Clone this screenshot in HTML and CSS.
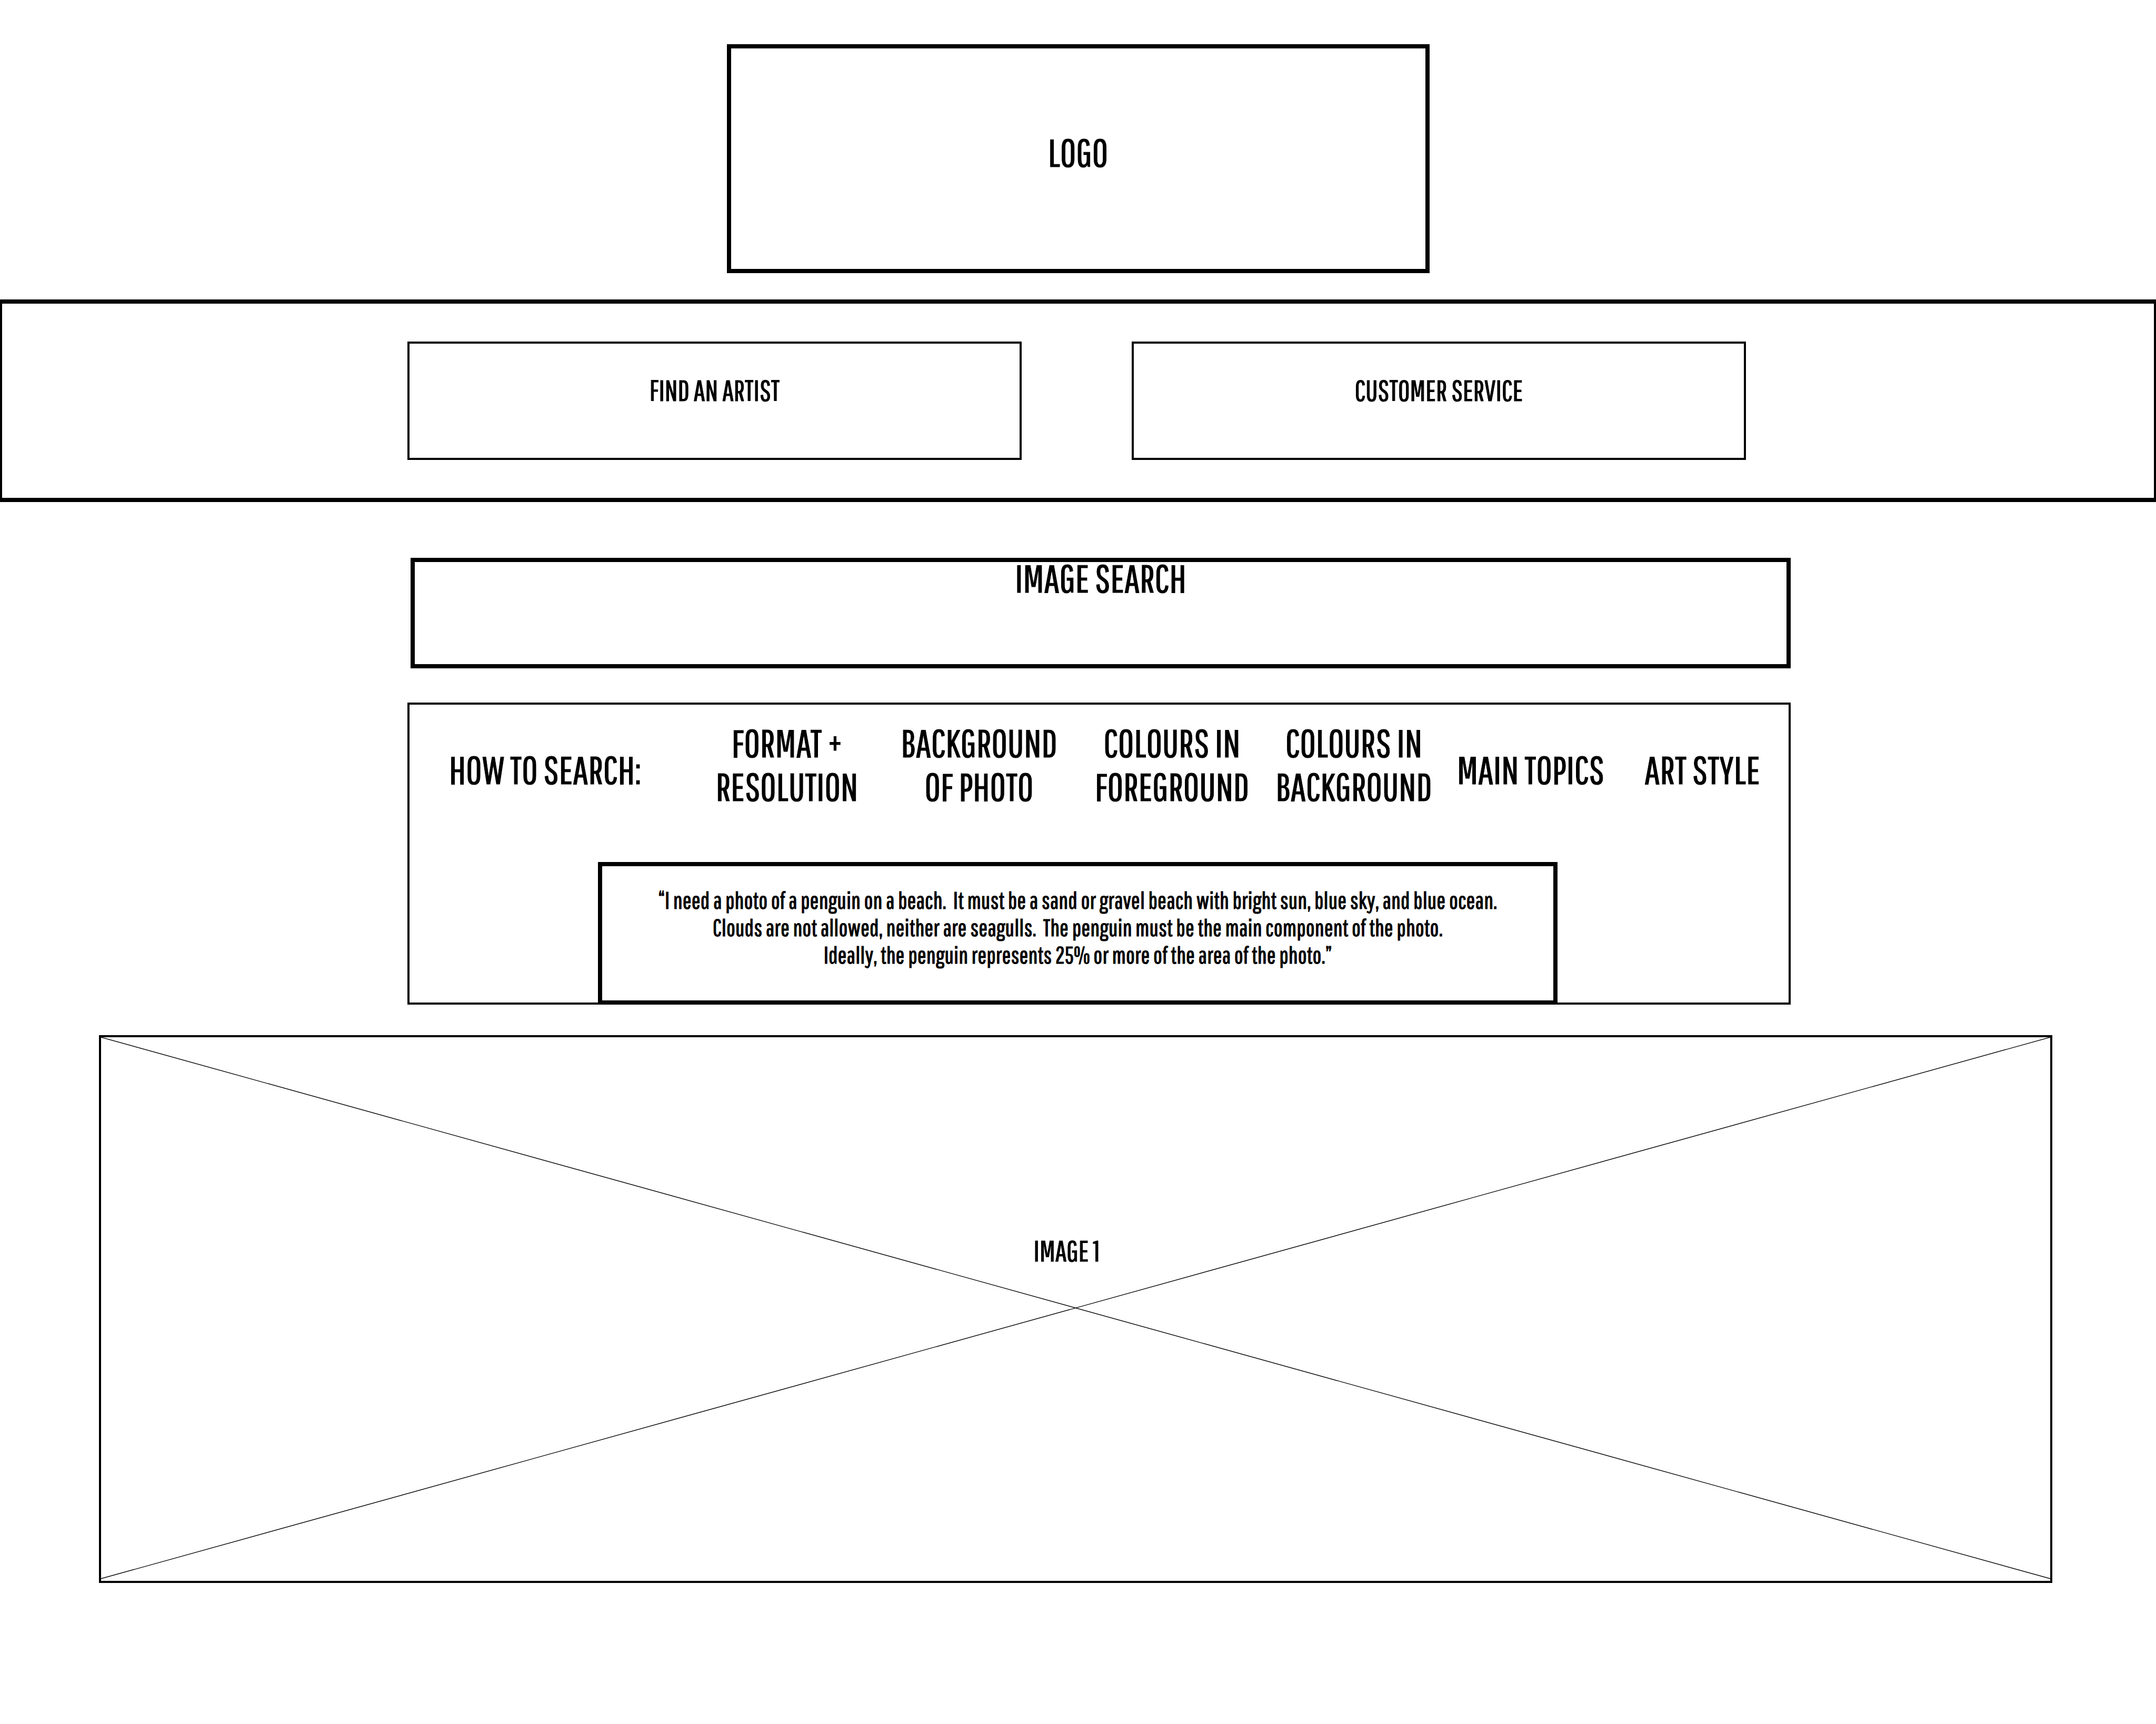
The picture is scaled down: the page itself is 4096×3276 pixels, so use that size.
FILE: index.html
```html
<!DOCTYPE html>
<html lang="en">
<head>
  <meta charset="utf-8">
  <meta name="viewport" content="width=device-width, initial-scale=1">
  <title>Image Search</title>
  <link rel="stylesheet" href="styles.css">
</head>
<body>
  <header class="masthead">
    <h1 class="logo">LOGO</h1>
  </header>

  <nav class="main-nav" aria-label="Main">
    <a class="nav-link" href="#artists">FIND AN ARTIST</a>
    <a class="nav-link" href="#service">CUSTOMER SERVICE</a>
  </nav>

  <main>
    <form class="search" role="search">
      <textarea class="search-box" rows="1" aria-label="Image search" placeholder="IMAGE SEARCH"></textarea>
    </form>

    <section class="guide">
      <div class="guide-row">
        <h2 class="guide-title">HOW TO SEARCH:</h2>
        <p class="guide-item two-line">FORMAT +<br>RESOLUTION</p>
        <p class="guide-item two-line">BACKGROUND<br>OF PHOTO</p>
        <p class="guide-item two-line">COLOURS IN<br>FOREGROUND</p>
        <p class="guide-item two-line">COLOURS IN<br>BACKGROUND</p>
        <p class="guide-item">MAIN TOPICS</p>
        <p class="guide-item">ART STYLE</p>
      </div>
      <blockquote class="example">
        “I need a photo of a penguin on a beach.&nbsp; It must be a sand or gravel beach with bright sun, blue sky, and blue ocean.<br>
        Clouds are not allowed, neither are seagulls.&nbsp; The penguin must be the main component of the photo.<br>
        Ideally, the penguin represents 25% or more of the area of the photo.”
      </blockquote>
    </section>

    <figure class="image">
      <svg class="cross" viewBox="0 0 5340 1490" preserveAspectRatio="none" aria-hidden="true">
        <path d="M0 0 5340 1484M0 1484 5340 0" fill="none" stroke="#000" stroke-width="2"/>
      </svg>
      <figcaption class="caption">IMAGE 1</figcaption>
    </figure>
  </main>
</body>
</html>
```
FILE: styles.css
```css
* {
  box-sizing: border-box;
  margin: 0;
}

body {
  background: #fff;
  color: #000;
  font-family: "Pathway Gothic One", "League Gothic", "Roboto Condensed", "Liberation Sans", sans-serif;
  font-size: 74px;
  line-height: 83px;
  -webkit-text-stroke: 1px #000;
}

.masthead {
  display: flex;
  justify-content: center;
  padding: 84px 0 50px;
}

.logo {
  flex: 0 1 1335px;
  padding: 156px 0 180px;
  border: 8px solid #000;
  font-size: inherit;
  font-weight: 400;
  text-align: center;
}

.main-nav {
  display: flex;
  gap: 209px;
  padding: 72px 775px 72px 770px;
  border: solid #000;
  border-width: 8px 4px;
}

.nav-link {
  flex: 1;
  padding: 47px 0 87px;
  border: 4px solid #000;
  color: inherit;
  font-size: 55px;
  text-align: center;
  text-decoration: none;
}

.search {
  margin: 106px 694px 65px 780px;
}

.search-box {
  display: block;
  width: 100%;
  height: 210px;
  padding: 0;
  border: 8px solid #000;
  border-radius: 0;
  background: #fff;
  color: inherit;
  font: inherit;
  line-height: 60px;
  text-align: center;
  resize: none;
  overflow: hidden;
}

.search-box::placeholder {
  color: #000;
  opacity: 1;
}

.guide {
  margin: 0 694px 58px 774px;
  border: 4px solid #000;
}

.guide-row {
  display: grid;
  grid-template-columns: 535fr 364fr 366fr 367fr 324fr 348fr 304fr;
  align-items: center;
  height: 299px;
  padding: 0 12px 52px 0;
}

.guide-title {
  padding-left: 75px;
  font-size: inherit;
  font-weight: 400;
}

.guide-item {
  text-align: center;
}

.two-line {
  padding-bottom: 20px;
}

.example {
  margin: 0 439px 0 358px;
  padding: 38px 0 61px;
  border: solid #000;
  border-width: 8px 8px 4px;
  font-size: 45px;
  line-height: 52px;
  text-align: center;
}

.image {
  display: grid;
  margin: 0 197px 0 188px;
  border: 4px solid #000;
}

.cross,
.caption {
  grid-area: 1 / 1;
}

.cross {
  width: 100%;
  height: 1033px;
}

.caption {
  padding: 364px 34px 0 0;
  font-size: 55px;
  text-align: center;
}
```
